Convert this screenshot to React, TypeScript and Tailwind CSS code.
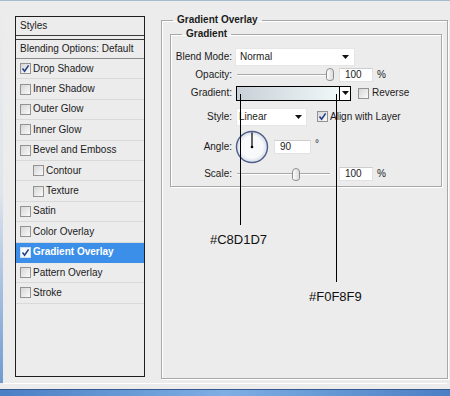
import React from "react";

type Item = { label: string; checked?: boolean; indent?: boolean; active?: boolean };

const items: Item[] = [
  { label: "Drop Shadow", checked: true },
  { label: "Inner Shadow" },
  { label: "Outer Glow" },
  { label: "Inner Glow" },
  { label: "Bevel and Emboss" },
  { label: "Contour", indent: true },
  { label: "Texture", indent: true },
  { label: "Satin" },
  { label: "Color Overlay" },
  { label: "Gradient Overlay", checked: true, active: true },
  { label: "Pattern Overlay" },
  { label: "Stroke" },
];

const CheckBox: React.FC<{ checked?: boolean; light?: boolean }> = ({ checked, light }) => (
  <span
    className={
      light
        ? "flex h-[11px] w-[11px] shrink-0 items-center justify-center border border-[#cfdff3] bg-[#f6f8fb]"
        : "flex h-[11px] w-[11px] shrink-0 items-center justify-center border border-[#939393] bg-linear-to-br from-[#d6d6d6] to-[#fafafa]"
    }
  >
    {checked && (
      <svg width="9" height="9" viewBox="0 0 9 9">
        <path d="M1.5 4.6 L3.6 7.2 L7.6 1.4" fill="none" stroke="#24408a" strokeWidth="1.6" />
      </svg>
    )}
  </span>
);

const Arrow = () => (
  <svg width="7" height="4" viewBox="0 0 7 4">
    <path d="M0 0H7L3.5 4Z" fill="#111" />
  </svg>
);

const Slider: React.FC<{ thumb: number }> = ({ thumb }) => (
  <div className="relative ml-[5px] flex h-[13px] w-[96px] items-center">
    <div className="h-[2px] w-[93px] border-t border-[#a9a9a9] border-b border-b-white" />
    <svg className="absolute top-0" style={{ left: thumb }} width="8" height="13" viewBox="0 0 8 13">
      <defs>
        <linearGradient id="thumbFill" x1="0" y1="0" x2="1" y2="0">
          <stop offset="0" stopColor="#ffffff" />
          <stop offset="1" stopColor="#d9d9d9" />
        </linearGradient>
      </defs>
      <path d="M0.5 4 Q0.5 0.5 4 0.5 Q7.5 0.5 7.5 4 V10.5 Q7.5 12.5 4 12.5 Q0.5 12.5 0.5 10.5 Z" fill="url(#thumbFill)" stroke="#8d8d8d" />
    </svg>
  </div>
);

const Field: React.FC<{ value: string; width: string }> = ({ value, width }) => (
  <div className={`flex h-[14px] items-center border border-[#e2e2e2] border-t-[#cdcdcd] bg-white pl-[5px] ${width}`}>
    {value}
  </div>
);

const Label: React.FC<{ text: string }> = ({ text }) => (
  <span className="w-[61px] shrink-0 text-right">{text}</span>
);

export default function App() {
  return (
    <div className="relative flex h-[396px] w-[450px] flex-col overflow-hidden bg-[#ececec] font-['Liberation_Sans',Arial,sans-serif] text-[10px] leading-[12px] text-[#1b1b1b]">
      <div className="h-px bg-[#a9bbcf]" />
      <div className="flex flex-1">
        <div className="w-[3px] bg-linear-to-b from-[#ececec] via-[#dfe5ec] to-[#6f9bd2]" />
        <div className="flex items-start pl-[12px] pt-[13px]">
          {/* styles list */}
          <div className="mt-[2px] flex h-[361px] w-[130px] flex-col border border-[#1e1e1e]">
            <div className="flex h-[19px] shrink-0 items-center border-b border-[#3a3a3a] pl-[4px]">Styles</div>
            <div className="h-[3px] shrink-0" />
            <div className="flex h-[20px] shrink-0 items-center border-t border-[#3a3a3a] border-b border-b-[#8c8c8c] pl-[4px]">
              Blending Options: Default
            </div>
            {items.map((it) => (
              <div
                key={it.label}
                className={`flex h-[20.4px] shrink-0 items-center gap-[2px] border-b ${
                  it.active ? "border-[#3b8fe8] bg-[#3b8fe8] font-bold text-white" : "border-[#d9d9d9]"
                } ${it.indent ? "pl-[17px]" : "pl-[4px]"}`}
              >
                <CheckBox checked={it.checked} light={it.active} />
                <span>{it.label}</span>
              </div>
            ))}
          </div>

          {/* gradient overlay group */}
          <fieldset className="ml-[16px] h-[365px] w-[287px] border border-[#a8a8a8] shadow-[inset_1px_1px_0_#fff,1px_1px_0_#fff]">
            <legend className="ml-[11px] px-[4px] font-bold leading-[12px]">Gradient Overlay</legend>
            <fieldset className="mt-[2px] mr-[5px] ml-[8px] border border-[#a8a8a8] pt-[8px] pb-[5px] shadow-[inset_1px_1px_0_#fff,1px_1px_0_#fff]">
              <legend className="ml-[11px] px-[4px] font-bold leading-[12px]">Gradient</legend>

              <div className="flex h-[18px] items-center">
                <Label text="Blend Mode:" />
                <div className="ml-[3px] flex h-[18px] w-[120px] items-center justify-between border border-[#e6e6e6] bg-white pr-[5px] pl-[4px]">
                  <span>Normal</span>
                  <Arrow />
                </div>
              </div>

              <div className="flex h-[17px] items-center">
                <Label text="Opacity:" />
                <Slider thumb={89} />
                <div className="ml-[6px]">
                  <Field value="100" width="w-[34px]" />
                </div>
                <span className="ml-[4px]">%</span>
              </div>

              <div className="flex h-[20px] items-center">
                <Label text="Gradient:" />
                <div className="ml-[4px] flex h-[15px]">
                  <div className="w-[104px] border border-black bg-linear-to-r from-[#c8d1d7] to-[#f0f8f9]" />
                  <div className="flex w-[11px] items-center justify-center border border-l-0 border-black bg-white">
                    <Arrow />
                  </div>
                </div>
                <div className="ml-[7px] flex items-center gap-[3px]">
                  <CheckBox />
                  <span>Reverse</span>
                </div>
              </div>

              <div className="mt-[4px] flex h-[19px] items-center">
                <Label text="Style:" />
                <div className="ml-[4px] flex h-[18px] w-[71px] items-center justify-between border border-[#e6e6e6] bg-white pr-[4px] pl-[2px]">
                  <span>Linear</span>
                  <Arrow />
                </div>
                <div className="ml-[10px] flex items-center gap-[2px]">
                  <CheckBox checked />
                  <span>Align with Layer</span>
                </div>
              </div>

              <div className="flex h-[41px] items-center">
                <Label text="Angle:" />
                <svg className="ml-[3px]" width="34" height="34" viewBox="0 0 34 34">
                  <defs>
                    <radialGradient id="dial" cx="50%" cy="50%" r="50%">
                      <stop offset="0.7" stopColor="#f8f9fb" />
                      <stop offset="1" stopColor="#d3dae6" />
                    </radialGradient>
                  </defs>
                  <circle cx="17" cy="17" r="15.5" fill="url(#dial)" stroke="#4f5f88" strokeWidth="1.4" />
                  <line x1="17" y1="17" x2="17" y2="2.5" stroke="#000" strokeWidth="1.2" />
                  <circle cx="17" cy="17" r="1.3" fill="#000" />
                </svg>
                <div className="ml-[5px]">
                  <Field value="90" width="w-[37px]" />
                </div>
                <span className="ml-[4px] -translate-y-[3px]">°</span>
              </div>

              <div className="flex h-[14px] items-center">
                <Label text="Scale:" />
                <Slider thumb={55} />
                <div className="ml-[6px]">
                  <Field value="100" width="w-[34px]" />
                </div>
                <span className="ml-[4px]">%</span>
              </div>
            </fieldset>
          </fieldset>
        </div>
      </div>

      {/* window bottom edge */}
      <div className="shrink-0">
        <div className="mx-[3px] h-px bg-white" />
        <div className="h-[5px]" />
        <div className="h-px bg-[#35598f]" />
        <div className="h-[6px] bg-linear-to-r from-[#4a7fc4] via-[#7eaee3] to-[#4a7fc4]" />
      </div>

      {/* colour annotations */}
      <div className="absolute top-[94px] left-[240px] h-[131px] w-px bg-black" />
      <div className="absolute top-[94px] left-[336px] h-[188px] w-px bg-black" />
      <span className="absolute top-[232px] left-[210px] text-[13px] leading-[15px] text-[#111]">#C8D1D7</span>
      <span className="absolute top-[289px] left-[309px] text-[13px] leading-[15px] text-[#111]">#F0F8F9</span>
    </div>
  );
}
